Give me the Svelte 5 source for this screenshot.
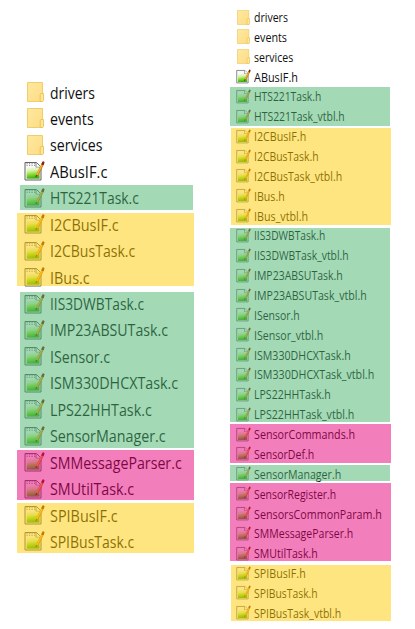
<script>
  // Each file is [name, printed width in px]
  const lists = [
    {
      id: 'sources', pitch: 26.44,
      files: [
        ['drivers', 43.7], ['events', 42.5], ['services', 51.3], ['ABusIF.c', 56.3],
        ['HTS221Task.c', 87.7], ['I2CBusIF.c', 67.5], ['I2CBusTask.c', 84], ['IBus.c', 38.5],
        ['IIS3DWBTask.c', 92.8], ['IMP23ABSUTask.c', 116.8], ['ISensor.c', 58.8],
        ['ISM330DHCXTask.c', 127], ['LPS22HHTask.c', 100.5], ['SensorManager.c', 114.5],
        ['SMMessageParser.c', 130.5], ['SMUtilTask.c', 83], ['SPIBusIF.c', 66.5], ['SPIBusTask.c', 83]
      ],
      // [colour, left, top, right, bottom]
      marks: [
        ['green', 20, 185, 193, 210], ['yellow', 17, 213, 194, 286], ['green', 20, 292, 194, 448],
        ['pink', 17, 450, 194, 500], ['yellow', 17, 503, 194, 553]
      ]
    },
    {
      id: 'headers', pitch: 19.87,
      files: [
        ['drivers', 32.7], ['events', 31.8], ['services', 38], ['ABusIF.h', 42.8],
        ['HTS221Task.h', 66], ['HTS221Task_vtbl.h', 89.5], ['I2CBusIF.h', 51], ['I2CBusTask.h', 63.5],
        ['I2CBusTask_vtbl.h', 87], ['IBus.h', 29.5], ['IBus_vtbl.h', 53], ['IIS3DWBTask.h', 70],
        ['IIS3DWBTask_vtbl.h', 93.5], ['IMP23ABSUTask.h', 87.5], ['IMP23ABSUTask_vtbl.h', 111.5],
        ['ISensor.h', 44.5], ['ISensor_vtbl.h', 68], ['ISM330DHCXTask.h', 95.5],
        ['ISM330DHCXTask_vtbl.h', 119], ['LPS22HHTask.h', 75.5], ['LPS22HHTask_vtbl.h', 99],
        ['SensorCommands.h', 100], ['SensorDef.h', 59], ['SensorManager.h', 86],
        ['SensorRegister.h', 81], ['SensorsCommonParam.h', 126.7], ['SMMessageParser.h', 98],
        ['SMUtilTask.h', 62.5], ['SPIBusIF.h', 50.5], ['SPIBusTask.h', 62.5], ['SPIBusTask_vtbl.h', 86]
      ],
      marks: [
        ['green', 230, 87, 390, 126], ['yellow', 231, 128, 391, 225], ['green', 230, 228, 390, 422],
        ['pink', 230, 424, 391, 463], ['green', 230, 465, 390, 481], ['pink', 230, 483, 391, 561],
        ['yellow', 231, 565, 391, 621]
      ]
    }
  ];

  // Condenses a label horizontally to its printed width
  function fit(node, width) {
    const natural = node.getBoundingClientRect().width;
    node.style.transform = `scaleX(${(width + 1.2) / natural})`;
  }
</script>

<main>
  <svg class="defs" width="0" height="0" aria-hidden="true">
    <defs>
      <linearGradient id="leaf" x1="0" y1="0" x2="0.15" y2="1">
        <stop offset="0" stop-color="#f4faee" />
        <stop offset="0.35" stop-color="#d4f0a8" />
        <stop offset="0.65" stop-color="#8ade30" />
        <stop offset="1" stop-color="#3fae14" />
      </linearGradient>
      <linearGradient id="fold" x1="0" y1="0" x2="1" y2="1">
        <stop offset="0" stop-color="#ffe8a0" />
        <stop offset="1" stop-color="#fddd84" />
      </linearGradient>
    </defs>
  </svg>
  {#each lists as list}
    <ul class={list.id}>
      {#each list.files as [name, width]}
        <li style:height="{list.pitch}px">
          {#if name.includes('.')}
            <svg class="page" viewBox="0 0 21 20">
              <path d="M1 1.5H12.5L17 6V19H1Z" fill="#fafafa" stroke="#606060" />
              {#if list.id === 'sources'}
                <path d="M2.5 2.3H12M2.5 4.2H11" stroke="#808080" stroke-width="1.1" stroke-dasharray="1.2 1.3" />
              {/if}
              <path d="M12 1.7V6.3H17" fill="#fff" stroke="#777" stroke-width=".9" />
              <rect x="2.6" y="6.5" width="13" height="11.2" fill="url(#leaf)" />
              <path d="M19 2.5L13 14.6" stroke="#c98018" stroke-width="2.5" />
              <path d="M18.3 3.5L12.7 14.2" stroke="#f8b83c" stroke-width="1.2" />
              <path d="M18.7 3L19.3 1.5" stroke="#842619" stroke-width="2.4" stroke-linecap="round" />
              <path d="M12 14L11.4 16.6L13.8 14.7Z" fill="#493719" />
            </svg>
          {:else}
            <svg class="folder" viewBox="0 0 17 20">
              <path d="M.5 .5H15.5V19.5H.5Z" fill="url(#fold)" stroke="#efcd6c" />
              <path d="M13.2 19.5V12.3L14 11.5H16.5V18.7L15.7 19.5Z" fill="#ffe596" stroke="#e5bd50" stroke-width=".8" />
            </svg>
          {/if}
          <span use:fit={width}>{name}</span>
        </li>
      {/each}
    </ul>
    {#each list.marks as [colour, left, top, right, bottom]}
      <div
        class="mark {colour}"
        style:left="{left}px"
        style:top="{top}px"
        style:width="{right - left}px"
        style:height="{bottom - top}px"
      ></div>
    {/each}
  {/each}
</main>

<style>
  :global(body) {
    background: #fff;
  }
  main {
    position: relative;
    display: flex;
    align-items: flex-start;
    box-sizing: border-box;
    width: 415px;
    height: 629px;
    overflow: hidden;
    background: #fff;
    color: #101010;
    font-family: 'Open Sans', sans-serif;
  }
  .defs {
    position: absolute;
  }
  ul {
    list-style: none;
    margin: 0;
    padding: 0;
  }
  li {
    display: flex;
    align-items: center;
    white-space: nowrap;
  }
  span {
    display: inline-block;
    flex: none;
    transform-origin: left center;
  }
  svg {
    flex: none;
  }
  .sources {
    width: 212px;
    padding: 79.3px 0 0 24px;
    box-sizing: border-box;
    font-size: 15.6px;
    line-height: 22px;
  }
  .sources .page {
    width: 21px;
    height: 20px;
    margin: 0 4.5px 1px 0;
  }
  .sources .folder {
    width: 17px;
    height: 20px;
    margin: 0 5.5px 1px 3px;
  }
  .headers {
    width: 203px;
    padding: 7.6px 0 0 24px;
    box-sizing: border-box;
    font-size: 11.7px;
    line-height: 17px;
  }
  .headers .page {
    width: 15px;
    height: 15px;
    margin: 0 3.4px 1px 0;
  }
  .headers .folder {
    width: 13px;
    height: 15px;
    margin: 0 4.4px 1px 1px;
  }
  .mark {
    position: absolute;
    opacity: 0.5;
  }
  .green {
    background: #49b36d;
  }
  .yellow {
    background: #ffcc00;
  }
  .pink {
    background: #e60078;
  }
</style>
